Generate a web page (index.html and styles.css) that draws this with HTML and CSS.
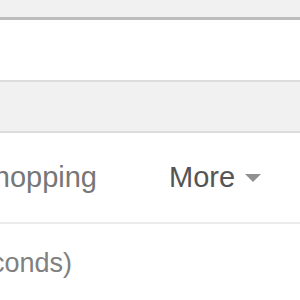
FILE: index.html
```html
<!DOCTYPE html>
<html>
<head>
<meta charset="utf-8">
<link rel="stylesheet" href="styles.css">
</head>
<body>
<div class="topbar"></div>
<div class="searchbox"></div>
<div class="greybar"></div>
<div class="tabs">
  <div class="tab-clip"><span class="tab">Shopping</span></div>
  <span class="tab more">More <span class="caret"></span></span>
</div>
<div class="stats">
  <div class="stats-clip"><span>About 2,140,000 results (0.32 seconds)</span></div>
</div>
</body>
</html>
```
FILE: styles.css
```css
html, body {
  margin: 0;
  padding: 0;
  background: #fff;
  font-family: "Liberation Sans", Arial, sans-serif;
  overflow: hidden;
}
.topbar {
  height: 17px;
  background: #f1f1f1;
  border-bottom: 3px solid #bdbdbd;
}
.searchbox {
  height: 60px;
  background: #fff;
}
.greybar {
  height: 49px;
  background: #f1f1f1;
  border-top: 2px solid #dcdcdc;
  border-bottom: 2px solid #dcdcdc;
}
.tabs {
  height: 89px;
  display: flex;
  align-items: center;
  border-bottom: 2px solid #ebebeb;
  font-size: 29px;
  white-space: nowrap;
}
.tab-clip {
  width: 97px;
  display: flex;
  justify-content: flex-end;
}
.tab { color: #777; }
.more {
  margin-left: 72px;
  color: #555;
  display: flex;
  align-items: center;
}
.caret {
  display: inline-block;
  margin-left: 10px;
  width: 0;
  height: 0;
  border-left: 8px solid transparent;
  border-right: 8px solid transparent;
  border-top: 8px solid #909090;
}
.stats {
  padding-top: 24px;
  font-size: 27px;
  color: #808080;
  white-space: nowrap;
}
.stats-clip {
  width: 72px;
  display: flex;
  justify-content: flex-end;
}
```
